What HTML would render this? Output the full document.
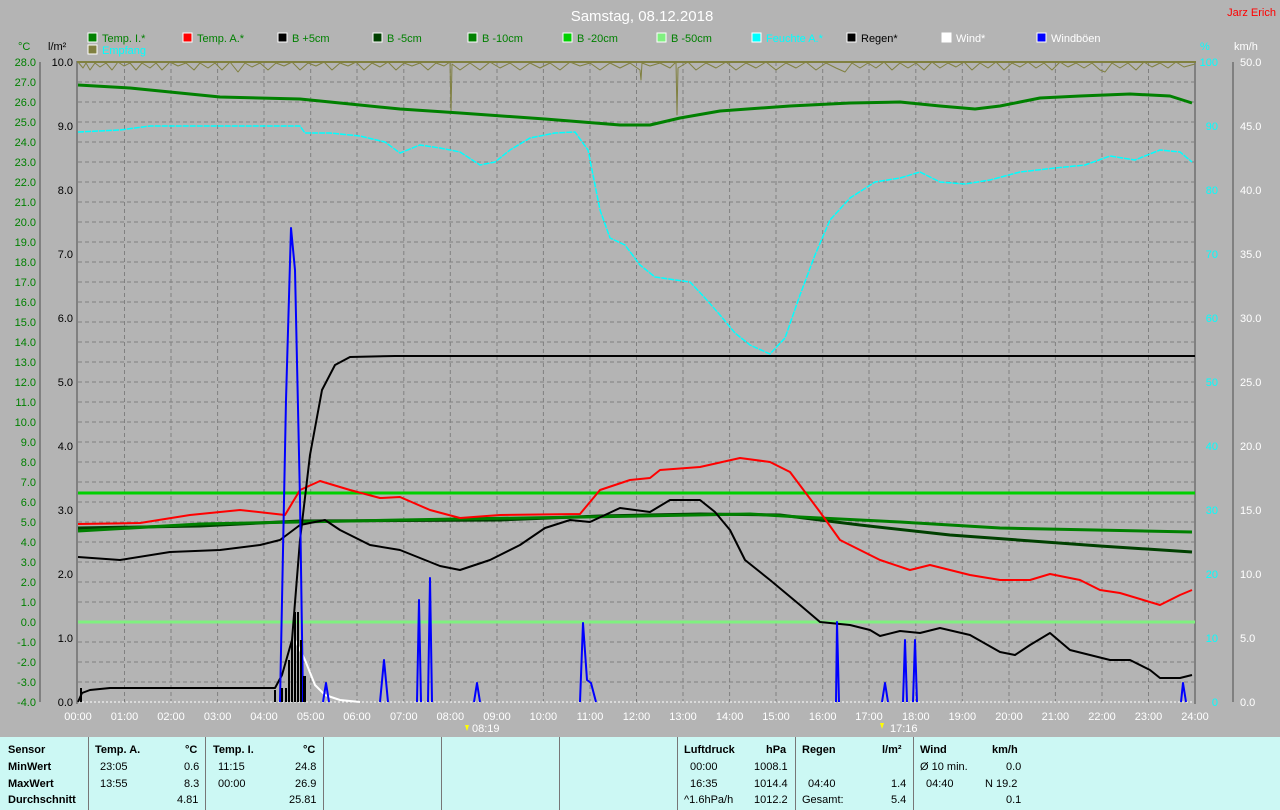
<!DOCTYPE html>
<html><head><meta charset="utf-8"><style>
html,body{margin:0;padding:0;width:1280px;height:810px;overflow:hidden;background:#b4b4b4;font-family:"Liberation Sans",sans-serif}
svg{position:absolute;left:0;top:0}
.tbl{position:absolute;left:0;top:737px;width:1280px;height:73px;background:#ccf8f4}
.tbl div{position:absolute;font-size:11px;color:#000;white-space:pre}
.b{font-weight:bold}
.sep{position:absolute;top:0;width:1px;height:73px;background:#777}
</style></head><body>
<svg width="1280" height="737" viewBox="0 0 1280 737" font-family="Liberation Sans, sans-serif" font-size="11">
<text x="642" y="21" fill="#fff" font-size="15" text-anchor="middle">Samstag, 08.12.2018</text>
<text x="1276" y="16" fill="#f00" font-size="11" text-anchor="end">Jarz Erich</text>
<g font-size="11">
<rect x="88" y="33" width="9" height="9" fill="#008000" stroke="#fff"/><text x="102" y="42" fill="#008000">Temp. I.*</text>
<rect x="183" y="33" width="9" height="9" fill="#f00" stroke="#fff"/><text x="197" y="42" fill="#008000">Temp. A.*</text>
<rect x="278" y="33" width="9" height="9" fill="#000" stroke="#fff"/><text x="292" y="42" fill="#008000">B +5cm</text>
<rect x="373" y="33" width="9" height="9" fill="#004000" stroke="#fff"/><text x="387" y="42" fill="#008000">B -5cm</text>
<rect x="468" y="33" width="9" height="9" fill="#008000" stroke="#fff"/><text x="482" y="42" fill="#008000">B -10cm</text>
<rect x="563" y="33" width="9" height="9" fill="#00d000" stroke="#fff"/><text x="577" y="42" fill="#008000">B -20cm</text>
<rect x="657" y="33" width="9" height="9" fill="#80f080" stroke="#fff"/><text x="671" y="42" fill="#008000">B -50cm</text>
<rect x="752" y="33" width="9" height="9" fill="#0ff" stroke="#fff"/><text x="766" y="42" fill="#0ff">Feuchte A.*</text>
<rect x="847" y="33" width="9" height="9" fill="#000" stroke="#fff"/><text x="861" y="42" fill="#000">Regen*</text>
<rect x="942" y="33" width="9" height="9" fill="#fff" stroke="#fff"/><text x="956" y="42" fill="#fff">Wind*</text>
<rect x="1037" y="33" width="9" height="9" fill="#00f" stroke="#fff"/><text x="1051" y="42" fill="#fff">Windböen</text>
<rect x="88" y="45" width="9" height="9" fill="#808040" stroke="#fff"/><text x="102" y="54" fill="#0ff">Empfang</text>
</g>
<text x="18" y="50" fill="#008000">°C</text><text x="48" y="50" fill="#000">l/m²</text>
<text x="1200" y="50" fill="#0ff">%</text><text x="1234" y="50" fill="#fff">km/h</text>
<g stroke="#808080" stroke-dasharray="4,3" stroke-width="1">
<path d="M78 82H1195M78 102H1195M78 122H1195M78 142H1195M78 162H1195M78 182H1195M78 202H1195M78 222H1195M78 242H1195M78 262H1195M78 282H1195M78 302H1195M78 322H1195M78 342H1195M78 362H1195M78 382H1195M78 402H1195M78 422H1195M78 442H1195M78 462H1195M78 482H1195M78 502H1195M78 522H1195M78 542H1195M78 562H1195M78 582H1195M78 602H1195M78 622H1195M78 642H1195M78 662H1195M78 682H1195"/>
<path d="M124.5 62V702M171 62V702M217.6 62V702M264 62V702M310.7 62V702M357 62V702M403.8 62V702M450.3 62V702M497 62V702M543.4 62V702M590 62V702M636.5 62V702M683 62V702M729.6 62V702M776 62V702M822.7 62V702M869 62V702M915.8 62V702M962.3 62V702M1009 62V702M1055.4 62V702M1102 62V702M1148.5 62V702"/>
</g>
<path d="M78 702H1195" stroke="#fff" stroke-dasharray="2,2"/>
<path d="M77 61V704M40 62V702M1195 61V704M1233 62V702" stroke="#808080" stroke-width="2" fill="none"/>
<path d="M77 62H1196" stroke="#808040" stroke-width="2"/>
<g fill="#008000" text-anchor="end">
<text x="36" y="66">28.0</text><text x="36" y="86">27.0</text><text x="36" y="106">26.0</text><text x="36" y="126">25.0</text><text x="36" y="146">24.0</text><text x="36" y="166">23.0</text><text x="36" y="186">22.0</text><text x="36" y="206">21.0</text><text x="36" y="226">20.0</text><text x="36" y="246">19.0</text><text x="36" y="266">18.0</text><text x="36" y="286">17.0</text><text x="36" y="306">16.0</text><text x="36" y="326">15.0</text><text x="36" y="346">14.0</text><text x="36" y="366">13.0</text><text x="36" y="386">12.0</text><text x="36" y="406">11.0</text><text x="36" y="426">10.0</text><text x="36" y="446">9.0</text><text x="36" y="466">8.0</text><text x="36" y="486">7.0</text><text x="36" y="506">6.0</text><text x="36" y="526">5.0</text><text x="36" y="546">4.0</text><text x="36" y="566">3.0</text><text x="36" y="586">2.0</text><text x="36" y="606">1.0</text><text x="36" y="626">0.0</text><text x="36" y="646">-1.0</text><text x="36" y="666">-2.0</text><text x="36" y="686">-3.0</text><text x="36" y="706">-4.0</text>
</g>
<g fill="#000" text-anchor="end">
<text x="73" y="66">10.0</text><text x="73" y="130">9.0</text><text x="73" y="194">8.0</text><text x="73" y="258">7.0</text><text x="73" y="322">6.0</text><text x="73" y="386">5.0</text><text x="73" y="450">4.0</text><text x="73" y="514">3.0</text><text x="73" y="578">2.0</text><text x="73" y="642">1.0</text><text x="73" y="706">0.0</text>
</g>
<g fill="#0ff" text-anchor="end">
<text x="1218" y="66">100</text><text x="1218" y="130">90</text><text x="1218" y="194">80</text><text x="1218" y="258">70</text><text x="1218" y="322">60</text><text x="1218" y="386">50</text><text x="1218" y="450">40</text><text x="1218" y="514">30</text><text x="1218" y="578">20</text><text x="1218" y="642">10</text><text x="1218" y="706">0</text>
</g>
<g fill="#fff">
<text x="1240" y="66">50.0</text><text x="1240" y="130">45.0</text><text x="1240" y="194">40.0</text><text x="1240" y="258">35.0</text><text x="1240" y="322">30.0</text><text x="1240" y="386">25.0</text><text x="1240" y="450">20.0</text><text x="1240" y="514">15.0</text><text x="1240" y="578">10.0</text><text x="1240" y="642">5.0</text><text x="1240" y="706">0.0</text>
</g>
<g fill="#fff" text-anchor="middle">
<text x="78" y="720">00:00</text><text x="124.5" y="720">01:00</text><text x="171" y="720">02:00</text><text x="217.6" y="720">03:00</text><text x="264" y="720">04:00</text><text x="310.7" y="720">05:00</text><text x="357" y="720">06:00</text><text x="403.8" y="720">07:00</text><text x="450.3" y="720">08:00</text><text x="497" y="720">09:00</text><text x="543.4" y="720">10:00</text><text x="590" y="720">11:00</text><text x="636.5" y="720">12:00</text><text x="683" y="720">13:00</text><text x="729.6" y="720">14:00</text><text x="776" y="720">15:00</text><text x="822.7" y="720">16:00</text><text x="869" y="720">17:00</text><text x="915.8" y="720">18:00</text><text x="962.3" y="720">19:00</text><text x="1009" y="720">20:00</text><text x="1055.4" y="720">21:00</text><text x="1102" y="720">22:00</text><text x="1148.5" y="720">23:00</text><text x="1195" y="720">24:00</text>
</g>
<text x="472" y="732" fill="#fff">08:19</text><path d="M465 725l2 6 2-6z" fill="#ff0"/>
<text x="890" y="732" fill="#fff">17:16</text><path d="M880 723l2 6 2-6z" fill="#ff0"/>
<g fill="none" stroke-linejoin="round">
<path d="M78 62L83 68L86 63L90 70L95 63L100 67L106 63L112 70L118 62L124 66L130 63L136 70L142 63L150 68L156 63L162 70L170 62L178 66L186 63L194 70L200 63L208 68L215 63L222 70L230 62L238 72L245 63L252 67L260 63L268 70L276 63L284 66L292 62L300 70L308 63L316 66L324 62L332 70L340 63L348 66L356 62L364 70L372 63L380 67L388 62L396 70L404 63L412 66L420 63L428 70L436 63L444 66L450 62L451 112L452 64L460 70L470 63L480 70L490 62L500 68L510 63L520 70L530 63L540 68L550 63L560 70L570 62L580 66L590 63L600 70L610 63L620 68L630 63L640 70L641 80L642 63L650 66L660 63L670 68L676 62L677 115L678 68L688 62L696 70L706 63L716 68L726 62L736 70L746 63L756 68L766 62L776 70L786 63L796 68L806 62L816 70L826 63L836 68L845 72L852 63L860 68L868 63L876 68L884 62L892 70L900 63L908 68L916 63L924 70L932 62L940 68L948 63L956 67L964 62L972 70L980 63L988 68L996 62L1004 70L1012 63L1020 67L1028 62L1036 68L1044 63L1052 70L1060 62L1068 67L1076 63L1084 68L1092 63L1100 70L1105 72L1112 63L1120 68L1128 63L1136 70L1144 62L1152 67L1160 63L1168 68L1176 62L1184 67L1195 64" stroke="#808040"/>
<path d="M78 85L130 88L180 93L220 97L300 99L350 104L400 109L460 113L545 119L620 125L650 125L680 118L720 111L790 106L850 103L900 102L940 106L975 109L1000 106L1040 98L1080 96L1130 94L1170 96L1192 103" stroke="#008000" stroke-width="3"/>
<path d="M78 132L120 130L150 126L300 126L305 133L330 133L360 136L385 142L400 153L420 145L440 148L460 152L480 165L495 162L510 150L530 138L555 133L575 132L588 150L600 210L610 238L625 245L640 265L655 277L690 282L705 298L720 315L735 333L750 345L770 354L785 338L800 295L815 255L830 220L850 198L875 182L900 178L920 172L940 182L965 184L990 180L1020 172L1055 168L1085 165L1110 156L1135 160L1160 150L1180 152L1192 162" stroke="#0ff" stroke-width="1.5" stroke-dasharray="6,1"/>
<path d="M78 493H1195" stroke="#00d000" stroke-width="3"/>
<path d="M78 622H1195" stroke="#80f080" stroke-width="3"/>
<path d="M78 528L200 526L300 521L500 520L600 516L700 514L780 515L860 525L950 535L1100 546L1192 552" stroke="#004000" stroke-width="3"/>
<path d="M78 531L200 524L400 520L640 516L750 514L800 517L900 522L1000 528L1192 532" stroke="#008000" stroke-width="3"/>
<path d="M78 524L140 523L190 515L240 510L285 515L300 490L320 481L350 490L380 498L400 497L430 510L460 518L500 515L580 514L600 490L630 480L650 478L660 470L700 467L740 458L770 462L790 472L820 512L840 540L860 550L880 560L910 570L930 565L970 575L1000 580L1030 580L1050 574L1080 580L1100 590L1120 593L1160 605L1180 595L1192 590" stroke="#f00" stroke-width="2"/>
<path d="M78 557L120 560L170 552L220 550L260 545L280 540L300 525L325 520L340 530L370 545L400 550L440 566L460 570L490 560L520 545L545 528L570 520L590 522L620 508L650 512L670 500L700 500L715 512L730 530L745 560L770 580L800 605L820 622L850 625L870 630L880 636L900 631L920 633L940 628L970 635L1000 652L1015 655L1030 645L1050 633L1070 650L1090 655L1110 660L1130 660L1150 670L1160 678L1180 678L1192 675" stroke="#000" stroke-width="2"/>
<path d="M78 702L82 693L90 690L110 688L275 688L282 675L292 640L300 540L310 455L322 390L335 365L350 357L395 356L1195 356" stroke="#000" stroke-width="2"/>
<path d="M295 640L305 660L315 685L325 695L340 700L360 702" stroke="#fff" stroke-width="2"/>
<path d="M280 702L286 400L291 228L295 270L300 500L303 702 M323 702L326 683L329 702 M380 702L384 660L388 702 M417 702L419 600L421 702 M428 702L430 578L432 702 M474 702L477 683L480 702 M580 702L583 623L587 680L591 683L596 702 M836 702L837 622L839 702 M882 702L885 683L888 702 M903 702L905 640L907 702 M913 702L915 640L917 702 M1181 702L1183 683L1186 702" stroke="#00f" stroke-width="2"/>
</g>
<g fill="#000">
<rect x="80" y="688" width="2" height="14"/><rect x="274" y="690" width="2" height="12"/><rect x="281" y="688" width="2" height="14"/><rect x="285" y="688" width="2" height="14"/><rect x="288" y="660" width="2" height="42"/><rect x="291" y="640" width="2" height="62"/><rect x="294" y="612" width="2" height="90"/><rect x="297" y="612" width="2" height="90"/><rect x="300" y="640" width="2" height="62"/><rect x="303" y="676" width="3" height="26"/>
</g>
</svg>
<div class="tbl">
<div class="sep" style="left:88px"></div><div class="sep" style="left:205px"></div><div class="sep" style="left:323px"></div><div class="sep" style="left:441px"></div><div class="sep" style="left:559px"></div><div class="sep" style="left:677px"></div><div class="sep" style="left:795px"></div><div class="sep" style="left:913px"></div>
<div class="b" style="left:8px;top:7px">Sensor</div><div class="b" style="left:8px;top:24px">MinWert</div><div class="b" style="left:8px;top:41px">MaxWert</div><div class="b" style="left:8px;top:57px">Durchschnitt</div>
<div class="b" style="left:95px;top:7px">Temp. A.</div><div class="b" style="left:185px;top:7px">°C</div>
<div style="left:100px;top:24px">23:05</div><div style="left:184px;top:24px">0.6</div>
<div style="left:100px;top:41px">13:55</div><div style="left:184px;top:41px">8.3</div>
<div style="left:177px;top:57px">4.81</div>
<div class="b" style="left:213px;top:7px">Temp. I.</div><div class="b" style="left:303px;top:7px">°C</div>
<div style="left:218px;top:24px">11:15</div><div style="left:295px;top:24px">24.8</div>
<div style="left:218px;top:41px">00:00</div><div style="left:295px;top:41px">26.9</div>
<div style="left:289px;top:57px">25.81</div>
<div class="b" style="left:684px;top:7px">Luftdruck</div><div class="b" style="left:766px;top:7px">hPa</div>
<div style="left:690px;top:24px">00:00</div><div style="left:754px;top:24px">1008.1</div>
<div style="left:690px;top:41px">16:35</div><div style="left:754px;top:41px">1014.4</div>
<div style="left:684px;top:57px">^1.6hPa/h</div><div style="left:754px;top:57px">1012.2</div>
<div class="b" style="left:802px;top:7px">Regen</div><div class="b" style="left:882px;top:7px">l/m²</div>
<div style="left:808px;top:41px">04:40</div><div style="left:891px;top:41px">1.4</div>
<div style="left:802px;top:57px">Gesamt:</div><div style="left:891px;top:57px">5.4</div>
<div class="b" style="left:920px;top:7px">Wind</div><div class="b" style="left:992px;top:7px">km/h</div>
<div style="left:920px;top:24px">Ø 10 min.</div><div style="left:1006px;top:24px">0.0</div>
<div style="left:926px;top:41px">04:40</div><div style="left:985px;top:41px">N 19.2</div>
<div style="left:1006px;top:57px">0.1</div>
</div>
</body></html>
